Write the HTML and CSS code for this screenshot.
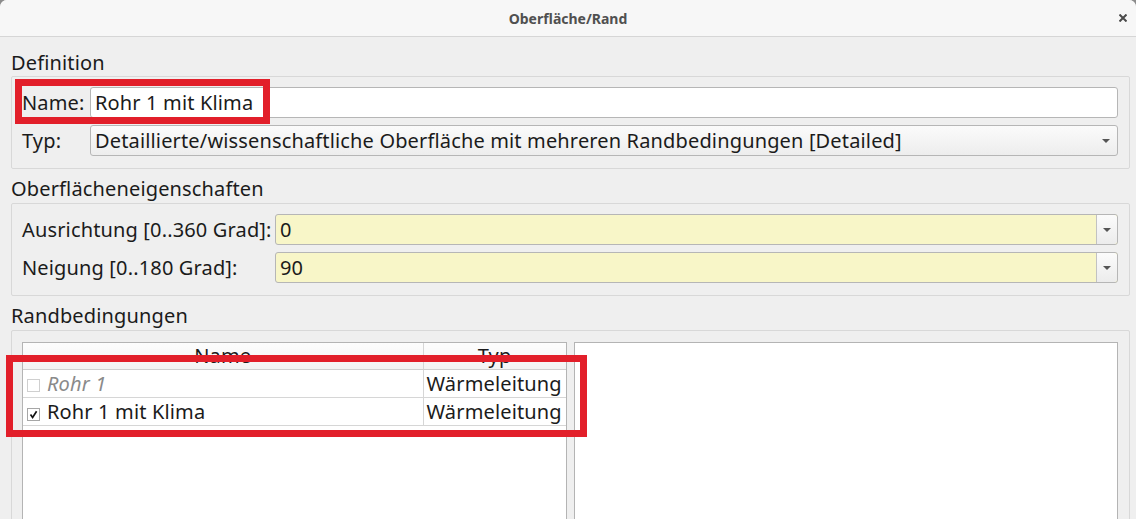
FILE: index.html
```html
<!DOCTYPE html>
<html lang="de">
  <head>
    <meta charset="UTF-8" />
    <meta name="viewport" content="width=device-width, initial-scale=1.0" />
    <title>Oberfläche/Rand</title>
    <link rel="stylesheet" href="styles.css">
  </head>
  <body>
    <div class="window">
      <header class="titlebar">
        <span></span>
        <span class="title">Oberfläche/Rand</span>
        <span class="close">
          <svg width="8" height="8" viewBox="0 0 8 8"><path d="M0.5 0.5 L7.5 7.5 M7.5 0.5 L0.5 7.5" stroke="#4a4a4a" stroke-width="2"/></svg>
        </span>
      </header>

      <main class="content">
        <div class="group-title">Definition</div>
        <section class="group group-def">
          <div class="mark mark-name"></div>
          <label class="label">Name:</label>
          <div class="field">Rohr 1 mit Klima</div>
          <label class="label">Typ:</label>
          <div class="combo">
            <span class="combo-text">Detaillierte/wissenschaftliche Oberfläche mit mehreren Randbedingungen [Detailed]</span>
            <span class="arrow"></span>
          </div>
        </section>

        <div class="group-title">Oberflächeneigenschaften</div>
        <section class="group group-props">
          <label class="label">Ausrichtung [0..360 Grad]:</label>
          <div class="combo editable">
            <span class="combo-text">0</span>
            <span class="combo-btn"><span class="arrow"></span></span>
          </div>
          <label class="label">Neigung [0..180 Grad]:</label>
          <div class="combo editable">
            <span class="combo-text">90</span>
            <span class="combo-btn"><span class="arrow"></span></span>
          </div>
        </section>

        <div class="group-title">Randbedingungen</div>
        <section class="group group-bc">
          <div class="mark mark-list"></div>
          <div class="tree">
            <table>
              <thead>
                <tr>
                  <th class="col-name">Name</th>
                  <th class="col-type">Typ</th>
                </tr>
              </thead>
              <tbody>
                <tr class="disabled">
                  <td><span class="check"></span>Rohr 1</td>
                  <td>Wärmeleitung</td>
                </tr>
                <tr>
                  <td>
                    <span class="check">
                      <svg width="11" height="11" viewBox="0 0 11 11"><path d="M2.5 5.5 L4.6 8.4 L8.6 2.2" fill="none" stroke="#111" stroke-width="1.7"/></svg>
                    </span>Rohr 1 mit Klima
                  </td>
                  <td>Wärmeleitung</td>
                </tr>
              </tbody>
            </table>
          </div>
          <div class="panel"></div>
        </section>
      </main>
    </div>
  </body>
</html>
```

FILE: styles.css
```css
body {
  margin: 0;
  width: 1136px;
  height: 519px;
  overflow: hidden;
  background: #8c8c8c;
  font-family: "Noto Sans", "DejaVu Sans", sans-serif;
  font-size: 20px;
  letter-spacing: 0.15px;
  color: #1b1b1b;
}
.window {
  height: 100%;
  background: #efefef;
  border-radius: 7px 7px 0 0;
  overflow: hidden;
}

/* title bar */
.titlebar {
  display: grid;
  grid-template-columns: 1fr auto 1fr;
  align-items: center;
  height: 36px;
  background: #f7f7f7;
  border-bottom: 1px solid #d6d6d6;
  letter-spacing: 0;
}
.title {
  font-size: 14px;
  font-weight: bold;
  color: #505050;
}
.close {
  justify-self: end;
  display: flex;
  margin: 0 9px 0 0;
}

.content {
  padding: 0 6px 0 11px;
}
.group-title {
  height: 39px;
  line-height: 51px;
}
.group {
  position: relative;
  border: 1px solid #d8d8d8;
  border-radius: 2px;
  padding: 10px 11px 12px 10px;
  display: grid;
  row-gap: 7px;
  align-items: center;
}
.group-def {
  grid-template-columns: 68px 1fr;
  grid-auto-rows: 31px;
}
.group-props {
  grid-template-columns: 253px 1fr;
  grid-auto-rows: 31px;
}
.group-def + .group-title,
.group-props + .group-title {
  height: 34px;
  line-height: 40px;
}
.group-bc {
  grid-template-columns: 1fr 1fr;
  column-gap: 7px;
  align-items: stretch;
  height: 240px;
  padding-top: 11px;
}

.label {
  white-space: nowrap;
}
.field,
.combo {
  box-sizing: border-box;
  height: 31px;
  border: 1px solid #b6b6b6;
  border-radius: 3px;
  line-height: 29px;
}
.field {
  background: #fff;
  padding-left: 4px;
}
.combo {
  display: flex;
  align-items: center;
  background: linear-gradient(#fbfbfb, #ededed);
}
.combo-text {
  flex: 1;
  padding-left: 4px;
  white-space: nowrap;
  overflow: hidden;
}
.arrow {
  width: 0;
  height: 0;
  margin-right: 7px;
  border-left: 4px solid transparent;
  border-right: 4px solid transparent;
  border-top: 4px solid #555;
}
.combo.editable {
  background: #f8f6c8;
}
.combo-btn {
  display: flex;
  align-items: center;
  justify-content: center;
  align-self: stretch;
  width: 20px;
  border-left: 1px solid #c2c2c2;
  border-radius: 0 3px 3px 0;
  background: linear-gradient(#fbfbfb, #ececec);
}
.combo-btn .arrow {
  margin: 0;
}

/* boundary condition list */
.tree,
.panel {
  border: 1px solid #b4b4b4;
  background: #fff;
}
.tree table {
  width: 100%;
  border-collapse: collapse;
}
.tree th {
  height: 26px;
  padding: 0;
  font-weight: normal;
  text-align: center;
  line-height: 26px;
  background: linear-gradient(#fdfdfd, #f3f3f3);
  border-bottom: 1px solid #cfcfcf;
}
.tree td {
  height: 27px;
  padding: 0 0 0 3px;
  line-height: 27px;
  white-space: nowrap;
  border-bottom: 1px solid #d6d6d6;
}
.tree .col-type,
.tree td + td {
  width: 139px;
  border-left: 1px solid #d6d6d6;
}
.check {
  display: inline-flex;
  align-items: center;
  justify-content: center;
  box-sizing: border-box;
  width: 13px;
  height: 13px;
  margin: 0 7px 0 1px;
  vertical-align: -1px;
  border: 1px solid #a6a6a6;
  background: #fff;
}
.disabled .check {
  border-color: #cfcfcf;
}
.disabled td:first-child {
  font-style: italic;
  color: #8a8a8a;
}

/* red highlight frames drawn over the form */
.mark {
  position: absolute;
  border: 7px solid #e21f2a;
  pointer-events: none;
}
.mark-name {
  left: 3px;
  top: 2px;
  width: 241px;
  height: 31px;
}
.mark-list {
  left: -6px;
  top: 24px;
  width: 567px;
  height: 68px;
}
```
